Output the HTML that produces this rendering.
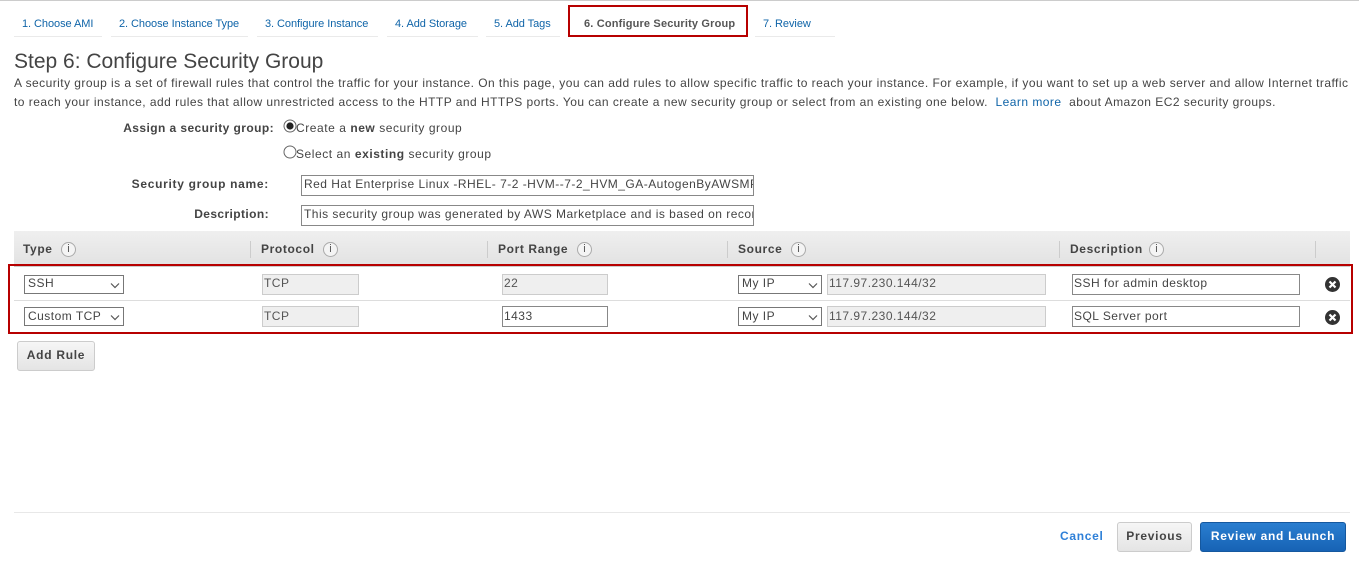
<!DOCTYPE html>
<html><head><meta charset="utf-8"><style>
html,body{margin:0;padding:0;background:#fff}
body{width:1359px;height:564px;position:relative;overflow:hidden;font-family:"Liberation Sans",sans-serif;color:#444;font-size:12px}
.a{position:absolute;white-space:nowrap}
.t{font-size:11px;color:#0f64a8;line-height:14px;top:17px;letter-spacing:-.06px}
.u{position:absolute;top:36px;height:1px;background:#eaeaea}
.p{font-size:12px;line-height:16px;left:14px;color:#444}
.l{font-weight:bold;font-size:12px;line-height:16px;color:#444;text-align:right}
.o{font-size:12px;letter-spacing:.55px;line-height:16px;color:#444}
.f{position:absolute;box-sizing:border-box;border:1px solid #777;background:#fff;font-size:12px;letter-spacing:.48px;line-height:17px;padding-left:1px;white-space:nowrap;overflow:hidden;color:#444}
.d{border:1px solid #ccc;background:#efefef;color:#555;height:21px}
.e{height:21px}
.s{height:19px;line-height:15px;padding-left:3px}
.s svg{position:absolute;right:3px;top:6px}
.h{font-weight:bold;font-size:12px;letter-spacing:.62px;line-height:16px;top:241px;color:#444}
.i{position:absolute;top:242px;width:15px;height:15px;box-sizing:border-box;border:1px solid #aaa;border-radius:50%;background:#f4f4f4;color:#555;font-size:11px;line-height:13px;text-align:center}
.v{position:absolute;top:241px;height:17px;width:1px;background:#ccc}
.x{position:absolute;left:1325px;width:15px;height:15px}
.b{position:absolute;box-sizing:border-box;border-radius:3px;text-align:center;font-weight:bold;font-size:12px;letter-spacing:.72px}
</style></head><body>
<div class="a" style="left:0;top:0;width:1359px;height:1px;background:#ccc"></div>

<span class="a t" style="left:22px">1. Choose AMI</span><div class="u" style="left:14px;width:88px"></div>
<span class="a t" style="left:119px">2. Choose Instance Type</span><div class="u" style="left:111px;width:137px"></div>
<span class="a t" style="left:265px">3. Configure Instance</span><div class="u" style="left:257px;width:121px"></div>
<span class="a t" style="left:395px">4. Add Storage</span><div class="u" style="left:387px;width:91px"></div>
<span class="a t" style="left:494px">5. Add Tags</span><div class="u" style="left:486px;width:74px"></div>
<div class="a" style="left:568px;top:5px;width:180px;height:32px;box-sizing:border-box;border:2px solid #b70000"></div>
<span class="a t" style="left:584px;font-weight:bold;color:#555;letter-spacing:.17px">6. Configure Security Group</span>
<span class="a t" style="left:763px">7. Review</span><div class="u" style="left:755px;width:80px"></div>

<div class="a" style="left:14px;top:50px;font-size:21px;line-height:24px;color:#444">Step 6: Configure Security Group</div>
<div class="a p" style="top:75px;letter-spacing:.45px">A security group is a set of firewall rules that control the traffic for your instance. On this page, you can add rules to allow specific traffic to reach your instance. For example, if you want to set up a web server and allow Internet traffic</div>
<div class="a p" style="top:94px;letter-spacing:.465px">to reach your instance, add rules that allow unrestricted access to the HTTP and HTTPS ports. You can create a new security group or select from an existing one below. <span style="color:#0f64a8">&nbsp;Learn more</span>&nbsp; about Amazon EC2 security groups.</div>

<div class="a l" style="right:1085px;top:120px;letter-spacing:.42px">Assign a security group:</div>
<svg class="a" style="left:283px;top:119px" width="14" height="14"><circle cx="7" cy="7" r="6" fill="#fff" stroke="#666"/><circle cx="7" cy="7" r="3.6" fill="#222"/></svg>
<div class="a o" style="left:296px;top:120px">Create a <b>new</b> security group</div>
<svg class="a" style="left:283px;top:145px" width="14" height="14"><circle cx="7" cy="7" r="6" fill="#fff" stroke="#666"/></svg>
<div class="a o" style="left:296px;top:146px">Select an <b>existing</b> security group</div>
<div class="a l" style="right:1090px;top:176px;letter-spacing:.7px">Security group name:</div>
<div class="f" style="left:301px;top:175px;width:453px;height:21px;border-color:#888;padding-left:2px">Red Hat Enterprise Linux -RHEL- 7-2 -HVM--7-2_HVM_GA-AutogenByAWSMP-</div>
<div class="a l" style="right:1090px;top:206px;letter-spacing:.4px">Description:</div>
<div class="f" style="left:301px;top:205px;width:453px;height:21px;border-color:#888;padding-left:2px">This security group was generated by AWS Marketplace and is based on recommended settings</div>

<div class="a" style="left:14px;top:231px;width:1336px;height:36px;box-sizing:border-box;background:linear-gradient(#efefef,#e3e3e3);border-bottom:3px solid #ccc"></div>
<span class="a h" style="left:23px">Type</span><span class="i" style="left:61px">i</span>
<div class="v" style="left:250px"></div><span class="a h" style="left:261px">Protocol</span><span class="i" style="left:323px">i</span>
<div class="v" style="left:487px"></div><span class="a h" style="left:498px">Port Range</span><span class="i" style="left:577px">i</span>
<div class="v" style="left:727px"></div><span class="a h" style="left:738px">Source</span><span class="i" style="left:791px">i</span>
<div class="v" style="left:1059px"></div><span class="a h" style="left:1070px">Description</span><span class="i" style="left:1149px">i</span>
<div class="v" style="left:1315px"></div>

<div class="a" style="left:14px;top:300px;width:1336px;height:1px;background:#ddd"></div>

<div class="f s" style="left:24px;top:275px;width:100px">SSH<svg width="10" height="7"><path d="M1 1.5 5 5.5 9 1.5" fill="none" stroke="#555" stroke-width="1.2"/></svg></div>
<div class="f d" style="left:262px;top:274px;width:97px">TCP</div>
<div class="f d" style="left:502px;top:274px;width:106px">22</div>
<div class="f s" style="left:738px;top:275px;width:84px">My IP<svg width="10" height="7"><path d="M1 1.5 5 5.5 9 1.5" fill="none" stroke="#555" stroke-width="1.2"/></svg></div>
<div class="f d" style="left:827px;top:274px;width:219px">117.97.230.144/32</div>
<div class="f e" style="left:1072px;top:274px;width:228px;border-color:#888">SSH for admin desktop</div>
<svg class="x" style="top:277px" viewBox="0 0 15 15"><circle cx="7.5" cy="7.5" r="7.5" fill="#333"/><path d="M4.5 4.5l6 6M10.5 4.5l-6 6" stroke="#fff" stroke-width="2.2"/></svg>

<div class="f s" style="left:24px;top:307px;width:100px;line-height:17px">Custom TCP<svg width="10" height="7"><path d="M1 1.5 5 5.5 9 1.5" fill="none" stroke="#555" stroke-width="1.2"/></svg></div>
<div class="f d" style="left:262px;top:306px;width:97px;line-height:19px">TCP</div>
<div class="f e" style="left:502px;top:306px;width:106px;border-color:#888;line-height:19px">1433</div>
<div class="f s" style="left:738px;top:307px;width:84px;line-height:17px">My IP<svg width="10" height="7"><path d="M1 1.5 5 5.5 9 1.5" fill="none" stroke="#555" stroke-width="1.2"/></svg></div>
<div class="f d" style="left:827px;top:306px;width:219px;line-height:19px">117.97.230.144/32</div>
<div class="f e" style="left:1072px;top:306px;width:228px;border-color:#888;line-height:19px">SQL Server port</div>
<svg class="x" style="top:310px" viewBox="0 0 15 15"><circle cx="7.5" cy="7.5" r="7.5" fill="#333"/><path d="M4.5 4.5l6 6M10.5 4.5l-6 6" stroke="#fff" stroke-width="2.2"/></svg>

<div class="a" style="left:8px;top:264px;width:1345px;height:70px;box-sizing:border-box;border:2px solid #b70000"></div>

<div class="b" style="left:17px;top:341px;width:78px;height:30px;line-height:26px;border:1px solid #ccc;background:linear-gradient(#f6f6f6,#e4e4e4);color:#444">Add Rule</div>

<div class="a" style="left:14px;top:512px;width:1336px;height:1px;background:#e8e8e8"></div>
<span class="a" style="left:1060px;top:528px;font-weight:bold;font-size:12px;letter-spacing:.7px;line-height:16px;color:#2f80d8">Cancel</span>
<div class="b" style="left:1117px;top:522px;width:75px;height:30px;line-height:27px;border:1px solid #ccc;background:linear-gradient(#f6f6f6,#e4e4e4);color:#444">Previous</div>
<div class="b" style="left:1200px;top:522px;width:146px;height:30px;line-height:27px;border:1px solid #15589f;background:linear-gradient(#2a7ed0,#1763b5);color:#fff">Review and Launch</div>
</body></html>
